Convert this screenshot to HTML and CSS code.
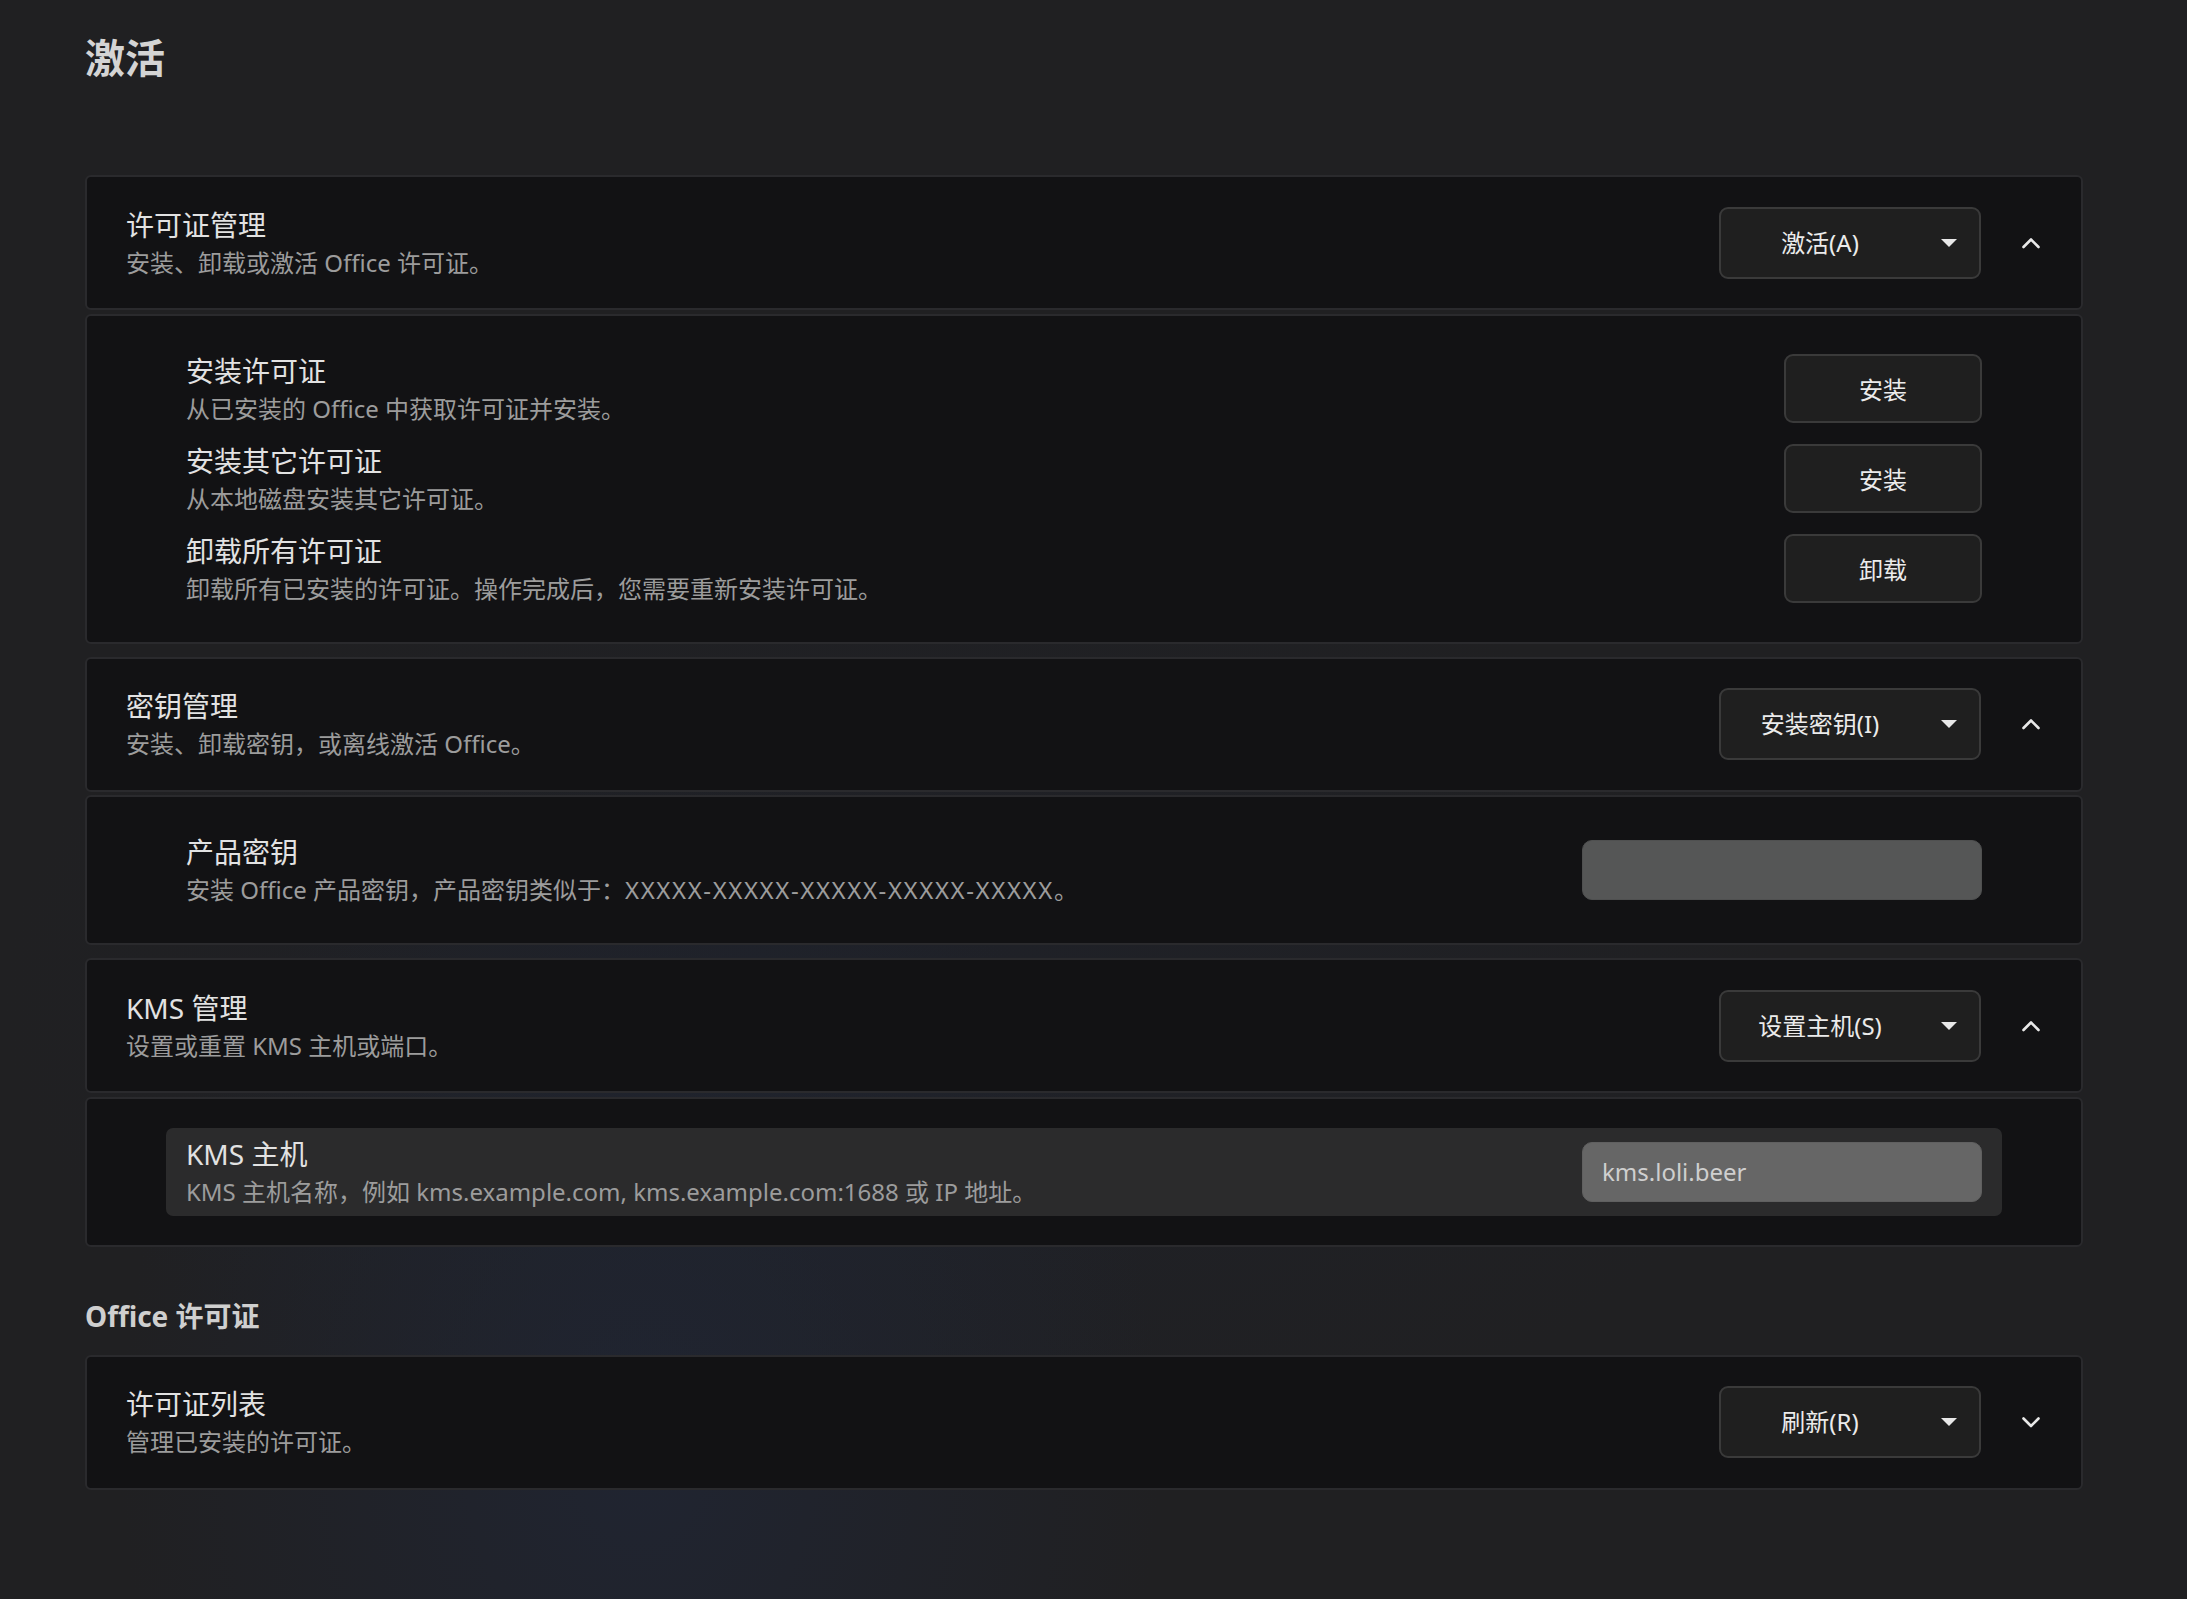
FILE: index.html
```html
<!DOCTYPE html>
<html lang="zh-CN">
<head>
<meta charset="utf-8">
<title>激活</title>
<link rel="stylesheet" href="styles.css">
</head>
<body>
<main class="page">
  <h1 class="page-title">激活</h1>

  <section class="group">
    <div class="card header">
      <div class="text">
        <div class="title">许可证管理</div>
        <div class="desc">安装、卸载或激活 Office 许可证。</div>
      </div>
      <button class="dropdown"><span class="dd-label">激活(A)</span><span class="dd-caret"><svg width="16" height="8" viewBox="0 0 16 8"><polygon points="0,0 16,0 8,8" fill="#e8e8e8"/></svg></span></button>
      <span class="chevron"><svg width="18" height="12" viewBox="0 0 18 12"><polyline points="1.5,10 9,2.5 16.5,10" fill="none" stroke="#e8e8e8" stroke-width="2.6" stroke-linecap="round" stroke-linejoin="round"/></svg></span>
    </div>
    <div class="card body">
      <div class="row">
        <div class="text">
          <div class="title">安装许可证</div>
          <div class="desc">从已安装的 Office 中获取许可证并安装。</div>
        </div>
        <button class="btn">安装</button>
      </div>
      <div class="row">
        <div class="text">
          <div class="title">安装其它许可证</div>
          <div class="desc">从本地磁盘安装其它许可证。</div>
        </div>
        <button class="btn">安装</button>
      </div>
      <div class="row">
        <div class="text">
          <div class="title">卸载所有许可证</div>
          <div class="desc">卸载所有已安装的许可证。操作完成后，您需要重新安装许可证。</div>
        </div>
        <button class="btn">卸载</button>
      </div>
    </div>
  </section>

  <section class="group">
    <div class="card header">
      <div class="text">
        <div class="title">密钥管理</div>
        <div class="desc">安装、卸载密钥，或离线激活 Office。</div>
      </div>
      <button class="dropdown"><span class="dd-label">安装密钥(I)</span><span class="dd-caret"><svg width="16" height="8" viewBox="0 0 16 8"><polygon points="0,0 16,0 8,8" fill="#e8e8e8"/></svg></span></button>
      <span class="chevron"><svg width="18" height="12" viewBox="0 0 18 12"><polyline points="1.5,10 9,2.5 16.5,10" fill="none" stroke="#e8e8e8" stroke-width="2.6" stroke-linecap="round" stroke-linejoin="round"/></svg></span>
    </div>
    <div class="card body">
      <div class="row">
        <div class="text">
          <div class="title">产品密钥</div>
          <div class="desc">安装 Office 产品密钥，产品密钥类似于：<span class="key-pattern">XXXXX-XXXXX-XXXXX-XXXXX-XXXXX</span>。</div>
        </div>
        <div class="input empty"></div>
      </div>
    </div>
  </section>

  <section class="group">
    <div class="card header">
      <div class="text">
        <div class="title">KMS 管理</div>
        <div class="desc">设置或重置 KMS 主机或端口。</div>
      </div>
      <button class="dropdown"><span class="dd-label">设置主机(S)</span><span class="dd-caret"><svg width="16" height="8" viewBox="0 0 16 8"><polygon points="0,0 16,0 8,8" fill="#e8e8e8"/></svg></span></button>
      <span class="chevron"><svg width="18" height="12" viewBox="0 0 18 12"><polyline points="1.5,10 9,2.5 16.5,10" fill="none" stroke="#e8e8e8" stroke-width="2.6" stroke-linecap="round" stroke-linejoin="round"/></svg></span>
    </div>
    <div class="card body">
      <div class="row active">
        <div class="text">
          <div class="title">KMS 主机</div>
          <div class="desc">KMS 主机名称，例如 kms.example.com, kms.example.com:1688 或 IP 地址。</div>
        </div>
        <div class="input filled">kms.loli.beer</div>
      </div>
    </div>
  </section>

  <h2 class="section-title">Office 许可证</h2>

  <section class="group">
    <div class="card header">
      <div class="text">
        <div class="title">许可证列表</div>
        <div class="desc">管理已安装的许可证。</div>
      </div>
      <button class="dropdown"><span class="dd-label">刷新(R)</span><span class="dd-caret"><svg width="16" height="8" viewBox="0 0 16 8"><polygon points="0,0 16,0 8,8" fill="#e8e8e8"/></svg></span></button>
      <span class="chevron"><svg width="18" height="12" viewBox="0 0 18 12"><polyline points="1.5,2.5 9,10 16.5,2.5" fill="none" stroke="#e8e8e8" stroke-width="2.6" stroke-linecap="round" stroke-linejoin="round"/></svg></span>
    </div>
  </section>
</main>
</body>
</html>
```

FILE: styles.css
```css
html, body {
  margin: 0;
  padding: 0;
}

body {
  min-height: 100vh;
  background-color: #202022;
  background-image:
    radial-gradient(ellipse 520px 700px at 640px 1450px, rgba(32, 38, 54, 0.75), rgba(32, 38, 54, 0) 100%),
    radial-gradient(ellipse 900px 500px at 900px 1000px, rgba(30, 34, 46, 0.5), rgba(30, 34, 46, 0) 100%);
  background-attachment: fixed;
  font-family: "Noto Sans", "Noto Sans CJK SC", sans-serif;
  color: #e4e4e4;
}

.page {
  padding: 30px 104px 40px 85px;
  display: flex;
  flex-direction: column;
}

.page-title {
  margin: 0 0 89px;
  font-size: 40px;
  line-height: 56px;
  font-weight: 700;
  color: #d4d4d4;
}

.section-title {
  margin: 36px 0 19px;
  font-size: 28px;
  line-height: 40px;
  font-weight: 700;
  color: #cfcfcf;
}

.group {
  display: flex;
  flex-direction: column;
  gap: 3.5px;
  margin-bottom: 13px;
}

.card {
  background: #121214;
  border: 2px solid #2a2a2d;
  border-radius: 6px;
  box-sizing: border-box;
}

.header {
  display: flex;
  align-items: center;
  padding: 27.5px 0 27.5px 39px;
}

.text {
  flex: 1;
  min-width: 0;
  display: flex;
  flex-direction: column;
}

.title {
  font-size: 28px;
  line-height: 40px;
  color: #e2e2e2;
  white-space: nowrap;
}

.desc {
  font-size: 24px;
  line-height: 36px;
  color: #9c9c9c;
  white-space: nowrap;
}

.key-pattern {
  letter-spacing: 1.6px;
}

.dropdown {
  width: 262px;
  height: 72px;
  display: flex;
  align-items: center;
  padding: 0;
  background: #1f1f1f;
  border: 2px solid #3a3a3a;
  border-radius: 9px;
  color: #ebebeb;
  font-family: inherit;
  font-size: 24px;
  box-sizing: border-box;
}

.dd-label {
  flex: 1;
  text-align: center;
  line-height: 36px;
}

.dd-caret {
  width: 60px;
  display: flex;
  justify-content: center;
  align-items: center;
}

.chevron {
  width: 100px;
  display: flex;
  justify-content: center;
  align-items: center;
}

.body {
  padding: 29px 79px;
  display: flex;
  flex-direction: column;
  gap: 2px;
}

.row {
  display: flex;
  align-items: center;
  padding: 6px 20px;
  border-radius: 7px;
}

.row.active {
  background: #2b2b2c;
}

.btn {
  width: 198px;
  height: 69px;
  padding: 0;
  background: #1f1f1f;
  border: 2px solid #3a3a3a;
  border-radius: 9px;
  color: #ebebeb;
  font-family: inherit;
  font-size: 24px;
  box-sizing: border-box;
}

.input {
  width: 400px;
  height: 60px;
  border-radius: 10px;
  box-sizing: border-box;
  display: flex;
  align-items: center;
  padding: 0 19px;
  font-size: 24px;
}

.input.empty {
  background: #555656;
  border: 1px solid #4f5050;
}

.input.filled {
  background: #666666;
  border: 1px solid #606060;
  color: #cfcfcf;
}
```
